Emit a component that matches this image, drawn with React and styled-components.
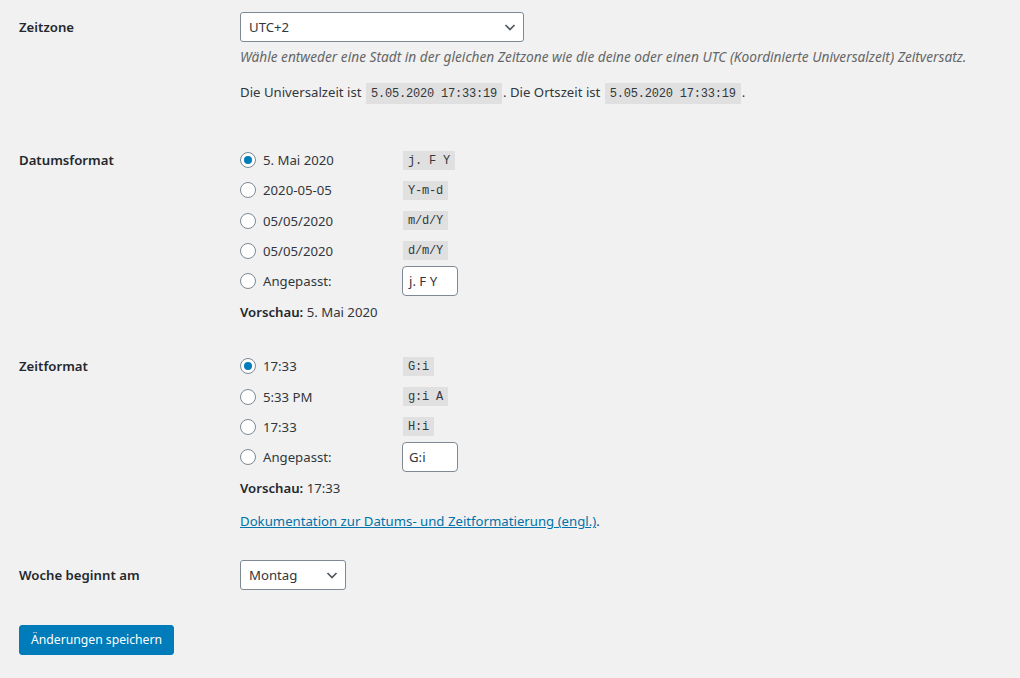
import React from "react";
import styled, { createGlobalStyle } from "styled-components";

const Global = createGlobalStyle`
  html, body { margin: 0; padding: 0; background: #f1f1f1; }
  body {
    font-family: "Noto Sans", "Open Sans", sans-serif;
    font-size: 13.2px;
    color: #32373c;
  }
  * { box-sizing: border-box; }
`;

const Page = styled.form`
  padding: 12px 20px 30px 19px;
  width: 1020px;
`;

const Row = styled.div`
  display: flex;
  align-items: flex-start;
  margin-top: ${(p) => p.$top || 0}px;
`;

const Label = styled.div`
  width: 221px;
  flex: none;
  font-weight: 600;
  color: #23282d;
  line-height: 30px;
  height: 30px;
`;

const Field = styled.div`
  flex: 1;
  display: flex;
  flex-direction: column;
  align-items: flex-start;
`;

const SelectBox = styled.div`
  position: relative;
  width: ${(p) => p.$w}px;
  height: 30px;
  background: #fff;
  border: 1px solid #7e8993;
  border-radius: 3px;
  padding: 0 24px 0 8px;
  line-height: 28px;
  color: #32373c;
  display: flex;
  align-items: center;
`;

const Chevron = styled.svg`
  position: absolute;
  right: 7px;
  top: 8px;
`;

const Description = styled.p`
  margin: 4px 0 0;
  height: 22px;
  font-style: italic;
  font-size: 13.7px;
  line-height: 22px;
  color: #666;
`;

const Line = styled.p`
  margin: ${(p) => p.$top || 0}px 0 0;
  height: ${(p) => p.$lh || 22}px;
  line-height: ${(p) => p.$lh || 22}px;
`;

const Code = styled.code`
  font-family: "Liberation Mono", "DejaVu Sans Mono", monospace;
  font-size: 12px;
  letter-spacing: -0.2px;
  line-height: 1;
  background: rgba(0, 0, 0, 0.07);
  padding: 4px 5px 3px;
  margin: 0 1px;
  color: #32373c;
`;

const Option = styled.label`
  display: flex;
  align-items: center;
  height: 30.25px;
`;

const Radio = styled.span`
  width: 16px;
  height: 16px;
  border-radius: 50%;
  border: 1px solid #7e8993;
  background: #fff;
  margin-right: 7px;
  display: flex;
  align-items: center;
  justify-content: center;
  &::after {
    content: "";
    width: 8px;
    height: 8px;
    border-radius: 50%;
    background: ${(p) => (p.$checked ? "#007cba" : "transparent")};
  }
`;

const OptionText = styled.span`
  display: inline-block;
  min-width: 139px;
`;

const CustomInput = styled.span`
  display: inline-flex;
  align-items: center;
  width: 56px;
  height: 30px;
  background: #fff;
  border: 1px solid #7e8993;
  border-radius: 4px;
  padding: 0 6px;
  color: #32373c;
`;

const Preview = styled.p`
  margin: 6px 0 0;
  height: 20px;
  line-height: 20px;
  strong { font-weight: 600; color: #23282d; }
`;

const DocLink = styled.a`
  color: #0073aa;
  text-decoration: underline;
`;

const Button = styled.button`
  margin-top: 35px;
  height: 30px;
  padding: 0 11px;
  background: #007cba;
  border: 1px solid #007cba;
  border-radius: 3px;
  color: #fff;
  font-family: inherit;
  font-size: 12.2px;
  line-height: 28px;
  display: block;
`;

const Select = ({ width, value }) => (
  <SelectBox $w={width}>
    <span>{value}</span>
    <Chevron width="12" height="12" viewBox="0 0 12 12">
      <path d="M1.5 4l4.5 4.5 4.5-4.5" fill="none" stroke="#50575e" strokeWidth="1.7" />
    </Chevron>
  </SelectBox>
);

const FormatOption = ({ checked, text, code, custom }) => (
  <Option>
    <Radio $checked={checked} />
    <OptionText>{text}</OptionText>
    {custom ? <CustomInput>{custom}</CustomInput> : <Code>{code}</Code>}
  </Option>
);

const dateFormats = [
  { text: "5. Mai 2020", code: "j. F Y", checked: true },
  { text: "2020-05-05", code: "Y-m-d" },
  { text: "05/05/2020", code: "m/d/Y" },
  { text: "05/05/2020", code: "d/m/Y" },
  { text: "Angepasst:", custom: "j. F Y" },
];

const timeFormats = [
  { text: "17:33", code: "G:i", checked: true },
  { text: "5:33 PM", code: "g:i A" },
  { text: "17:33", code: "H:i" },
  { text: "Angepasst:", custom: "G:i" },
];

export default function App() {
  return (
    <>
      <Global />
      <Page onSubmit={(e) => e.preventDefault()}>
        <Row>
          <Label>Zeitzone</Label>
          <Field>
            <Select width={284} value="UTC+2" />
            <Description>
              Wähle entweder eine Stadt in der gleichen Zeitzone wie die deine oder einen UTC (Koordinierte Universalzeit) Zeitversatz.
            </Description>
            <Line $top={13}>
              Die Universalzeit ist <Code>5.05.2020 17:33:19</Code>. Die Ortszeit ist <Code>5.05.2020 17:33:19</Code>.
            </Line>
          </Field>
        </Row>

        <Row $top={42}>
          <Label>Datumsformat</Label>
          <Field>
            {dateFormats.map((f, i) => (
              <FormatOption key={i} {...f} />
            ))}
            <Preview>
              <strong>Vorschau:</strong> 5. Mai 2020
            </Preview>
          </Field>
        </Row>

        <Row $top={29}>
          <Label>Zeitformat</Label>
          <Field>
            {timeFormats.map((f, i) => (
              <FormatOption key={i} {...f} />
            ))}
            <Preview>
              <strong>Vorschau:</strong> 17:33
            </Preview>
            <Line $top={13} $lh={20}>
              <DocLink href="#">Dokumentation zur Datums- und Zeitformatierung (engl.)</DocLink>.
            </Line>
          </Field>
        </Row>

        <Row $top={29}>
          <Label>Woche beginnt am</Label>
          <Field>
            <Select width={106} value="Montag" />
          </Field>
        </Row>

        <Button type="submit">Änderungen speichern</Button>
      </Page>
    </>
  );
}
